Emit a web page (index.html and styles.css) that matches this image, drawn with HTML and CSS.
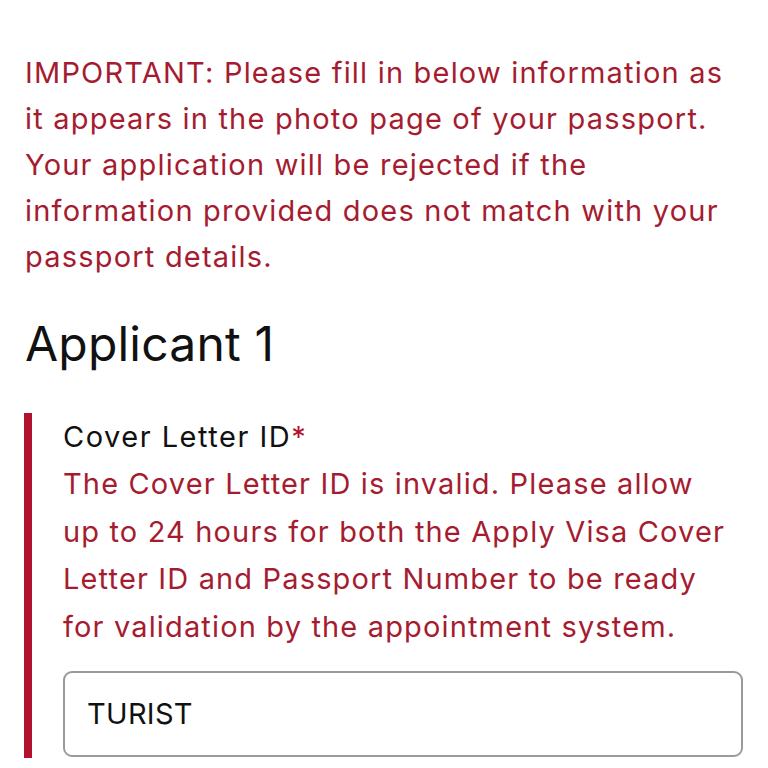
FILE: index.html
```html
<!DOCTYPE html>
<html lang="en">
<head>
<meta charset="utf-8">
<link rel="stylesheet" href="styles.css">
</head>
<body>
<main class="page">
  <p class="notice">IMPORTANT: Please fill in below information as it appears in the photo page of your passport. Your application will be rejected if the information provided does not match with your passport details.</p>
  <h2 class="applicant">Applicant 1</h2>
  <div class="field field-error">
    <label class="label" for="cover">Cover Letter ID<span class="req">*</span></label>
    <div class="error">The Cover Letter ID is invalid. Please allow up to 24 hours for both the Apply Visa Cover Letter ID and Passport Number to be ready for validation by the appointment system.</div>
    <input class="input" id="cover" type="text" value="TURIST">
  </div>
</main>
</body>
</html>
```
FILE: styles.css
```css
html, body {
  margin: 0;
  padding: 0;
  background: #ffffff;
}
.page {
  font-family: Inter, "Noto Sans", sans-serif;
  padding: 50px 25px 0 25px;
}
.notice {
  margin: 0;
  color: #a51c30;
  font-size: 29px;
  line-height: 46px;
  letter-spacing: 1.2px;
}
.applicant {
  margin: 35px 0 0 0;
  font-weight: 400;
  font-size: 48px;
  line-height: 58px;
  letter-spacing: 0.2px;
  color: #111111;
}
.field {
  margin-top: 40px;
  margin-left: -1px;
  border-left: 8px solid #b3122f;
  padding: 0 0 1px 31px;
  display: flex;
  flex-direction: column;
}
.label {
  font-size: 29px;
  line-height: 47px;
  letter-spacing: 1.5px;
  color: #111111;
}
.req {
  color: #b3122f;
}
.error {
  margin-right: 6px;
  color: #a51c30;
  font-size: 29px;
  line-height: 47.7px;
  letter-spacing: 1.15px;
}
.input {
  margin-top: 20px;
  box-sizing: border-box;
  height: 86px;
  width: 100%;
  border: 2px solid #9a9a9a;
  border-radius: 9px;
  padding: 0 22px;
  font-family: Inter, "Noto Sans", sans-serif;
  font-size: 29px;
  letter-spacing: 0.3px;
  color: #111111;
  background: #ffffff;
  outline: none;
}
```
